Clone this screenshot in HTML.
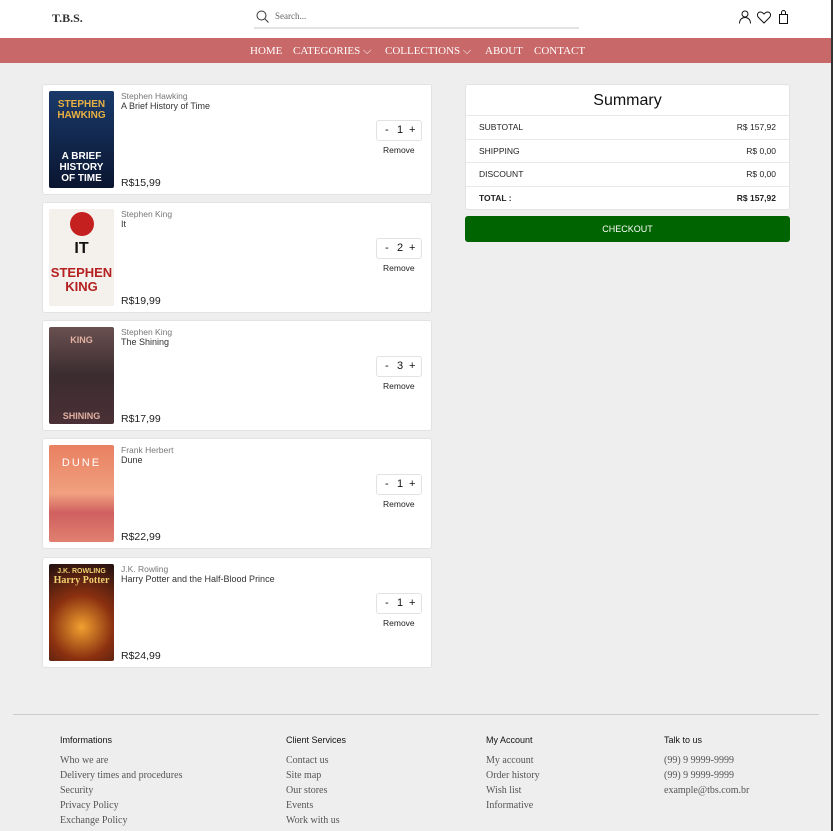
<!DOCTYPE html>
<html><head><meta charset="utf-8"><style>
*{margin:0;padding:0;box-sizing:border-box}
body{width:833px;height:831px;overflow:hidden;background:#eee;font-family:"Liberation Sans",sans-serif;position:relative}
.hdr{position:absolute;left:0;top:0;width:831px;height:38px;background:#fff}
.logo{position:absolute;left:52px;top:11px;font:bold 12px "Liberation Serif",serif;color:#333}
.search{position:absolute;left:254px;top:5px;width:325px;height:24px;border-bottom:2px solid #e3e3e3}
.search span{position:absolute;left:21px;top:6px;font:9px "Liberation Serif",serif;color:#666}
.nav{position:absolute;left:0;top:38px;width:831px;height:25px;background:#c86868;color:#fff;font:11px "Liberation Serif",serif}
.nav span{position:absolute;top:7px}
.edge{position:absolute;left:831px;top:0;width:2px;height:831px;background:#333}
.card{position:absolute;left:42px;width:390px;height:111px;background:#fff;border:1px solid #e2e2e2;border-radius:3px}
.cov{position:absolute;left:6px;top:6px;width:65px;height:97px;border-radius:2px;overflow:hidden;color:#fff;font-weight:bold;text-align:center}
.au{position:absolute;left:78px;top:6px;font-size:8.5px;color:#777}
.ti{position:absolute;left:78px;top:16px;font-size:9px;color:#333}
.pr{position:absolute;left:78px;top:92px;font-size:10.5px;color:#222}
.qty{position:absolute;left:333px;top:35px;width:46px;height:21px;border:1px solid #e2e2e2;border-radius:3px;font-size:11px;color:#111}
.qty span{position:absolute;top:3px}
.rm{position:absolute;left:340px;top:60px;font-size:8.5px;color:#222}
.sum{position:absolute;left:465px;top:84px;width:325px;height:126px;background:#fff;border:1px solid #e2e2e2;border-radius:3px}
.sum h2{font-weight:normal;font-size:16px;text-align:center;height:31px;line-height:31px;color:#111;border-bottom:1px solid #e8e8e8}
.row{height:23.5px;line-height:23px;font-size:8.5px;color:#222;padding:0 13px;border-bottom:1px solid #e8e8e8;display:flex;justify-content:space-between}
.btn{position:absolute;left:465px;top:216px;width:325px;height:26px;background:#006400;border-radius:3px;color:#fff;font-size:9px;text-align:center;line-height:26px}
.fl{position:absolute;left:13px;top:714px;width:806px;height:1px;background:#ccc}
.col{position:absolute;top:735px;font:12px "Liberation Serif",serif;color:#555}
.col h4{font:9px "Liberation Sans",sans-serif;color:#111;margin-bottom:10px}
.col div{height:15px;font-size:10px}
</style></head><body>
<div class="hdr">
<div class="logo">T.B.S.</div>
<div class="search"><svg style="position:absolute;left:2px;top:5px" width="13" height="13" viewBox="0 0 13 13"><circle cx="5.5" cy="5.5" r="4.5" fill="none" stroke="#333" stroke-width="1"/><path d="M9 9l3.5 3.5" stroke="#333"/></svg><span>Search...</span></div>
<svg style="position:absolute;left:738px;top:10px" width="50" height="14" viewBox="0 0 50 14"><circle cx="7" cy="4" r="3" fill="none" stroke="#111"/><path d="M1.5 13.5c0-4 2.5-6 5.5-6s5.5 2 5.5 6" fill="none" stroke="#111"/><path d="M26 13L20.5 7.5C18.5 5.5 19.5 2 22.5 2c1.5 0 2.5 1 3.5 2c1-1 2-2 3.5-2c3 0 4 3.5 2 5.5z" fill="none" stroke="#111"/><rect x="41.5" y="4.5" width="8" height="9" fill="none" stroke="#111"/><path d="M43.5 4.5v-2a2 2 0 0 1 4 0v2" fill="none" stroke="#111"/></svg>
</div>
<div class="nav"><span style="left:250px">HOME</span><span style="left:293px">CATEGORIES ⌵</span><span style="left:385px">COLLECTIONS ⌵</span><span style="left:485px">ABOUT</span><span style="left:534px">CONTACT</span></div>

<div class="card" style="top:84px"><div class="cov" style="background:linear-gradient(#1a3a6a,#0a1530);font-size:10px;color:#e8b040"><div style="margin-top:8px;line-height:11px">STEPHEN<br>HAWKING</div><div style="color:#fff;margin-top:30px;line-height:11px;font-size:10px">A BRIEF<br>HISTORY<br>OF TIME</div></div><div class="au">Stephen Hawking</div><div class="ti">A Brief History of Time</div><div class="pr">R$15,99</div><div class="qty"><span style="left:8px">-</span><span style="left:20px">1</span><span style="left:32px">+</span></div><div class="rm">Remove</div></div>

<div class="card" style="top:202px"><div class="cov" style="background:#f4f0ec;color:#b52020"><div style="width:24px;height:24px;border-radius:50%;background:#c42020;margin:3px auto 0"></div><div style="color:#111;font-size:16px;line-height:18px;margin-top:4px">IT</div><div style="font-size:13px;line-height:14px;margin-top:8px">STEPHEN<br>KING</div></div><div class="au">Stephen King</div><div class="ti">It</div><div class="pr">R$19,99</div><div class="qty"><span style="left:8px">-</span><span style="left:20px">2</span><span style="left:32px">+</span></div><div class="rm">Remove</div></div>

<div class="card" style="top:320px"><div class="cov" style="background:linear-gradient(#6a5050,#3a2c30 50%,#4a3036);font-size:9px;color:#e0b0a0"><div style="margin-top:8px">KING</div><div style="margin-top:66px">SHINING</div></div><div class="au">Stephen King</div><div class="ti">The Shining</div><div class="pr">R$17,99</div><div class="qty"><span style="left:8px">-</span><span style="left:20px">3</span><span style="left:32px">+</span></div><div class="rm">Remove</div></div>

<div class="card" style="top:438px"><div class="cov" style="background:linear-gradient(#e88060,#f0a080 50%,#d06060 70%,#e08070);font-size:11px;font-weight:normal"><div style="margin-top:12px;letter-spacing:2px">DUNE</div></div><div class="au">Frank Herbert</div><div class="ti">Dune</div><div class="pr">R$22,99</div><div class="qty"><span style="left:8px">-</span><span style="left:20px">1</span><span style="left:32px">+</span></div><div class="rm">Remove</div></div>

<div class="card" style="top:557px"><div class="cov" style="background:radial-gradient(circle at 50% 65%,#f0a030,#8a3010 45%,#201010);font-size:10px;color:#f0d070"><div style="margin-top:4px;font-size:7px">J.K. ROWLING</div><div style="font-family:'Liberation Serif',serif">Harry Potter</div></div><div class="au">J.K. Rowling</div><div class="ti">Harry Potter and the Half-Blood Prince</div><div class="pr">R$24,99</div><div class="qty"><span style="left:8px">-</span><span style="left:20px">1</span><span style="left:32px">+</span></div><div class="rm">Remove</div></div>

<div class="sum"><h2>Summary</h2>
<div class="row"><span>SUBTOTAL</span><span>R$ 157,92</span></div>
<div class="row"><span>SHIPPING</span><span>R$ 0,00</span></div>
<div class="row"><span>DISCOUNT</span><span>R$ 0,00</span></div>
<div class="row" style="border:none;font-weight:bold"><span>TOTAL :</span><span>R$ 157,92</span></div></div>
<div class="btn">CHECKOUT</div>

<div class="fl"></div>
<div class="col" style="left:60px"><h4>Imformations</h4><div>Who we are</div><div>Delivery times and procedures</div><div>Security</div><div>Privacy Policy</div><div>Exchange Policy</div></div>
<div class="col" style="left:286px"><h4>Client Services</h4><div>Contact us</div><div>Site map</div><div>Our stores</div><div>Events</div><div>Work with us</div></div>
<div class="col" style="left:486px"><h4>My Account</h4><div>My account</div><div>Order history</div><div>Wish list</div><div>Informative</div></div>
<div class="col" style="left:664px"><h4>Talk to us</h4><div>(99) 9 9999-9999</div><div>(99) 9 9999-9999</div><div>example@tbs.com.br</div></div>
<div class="edge"></div>
</body></html>
